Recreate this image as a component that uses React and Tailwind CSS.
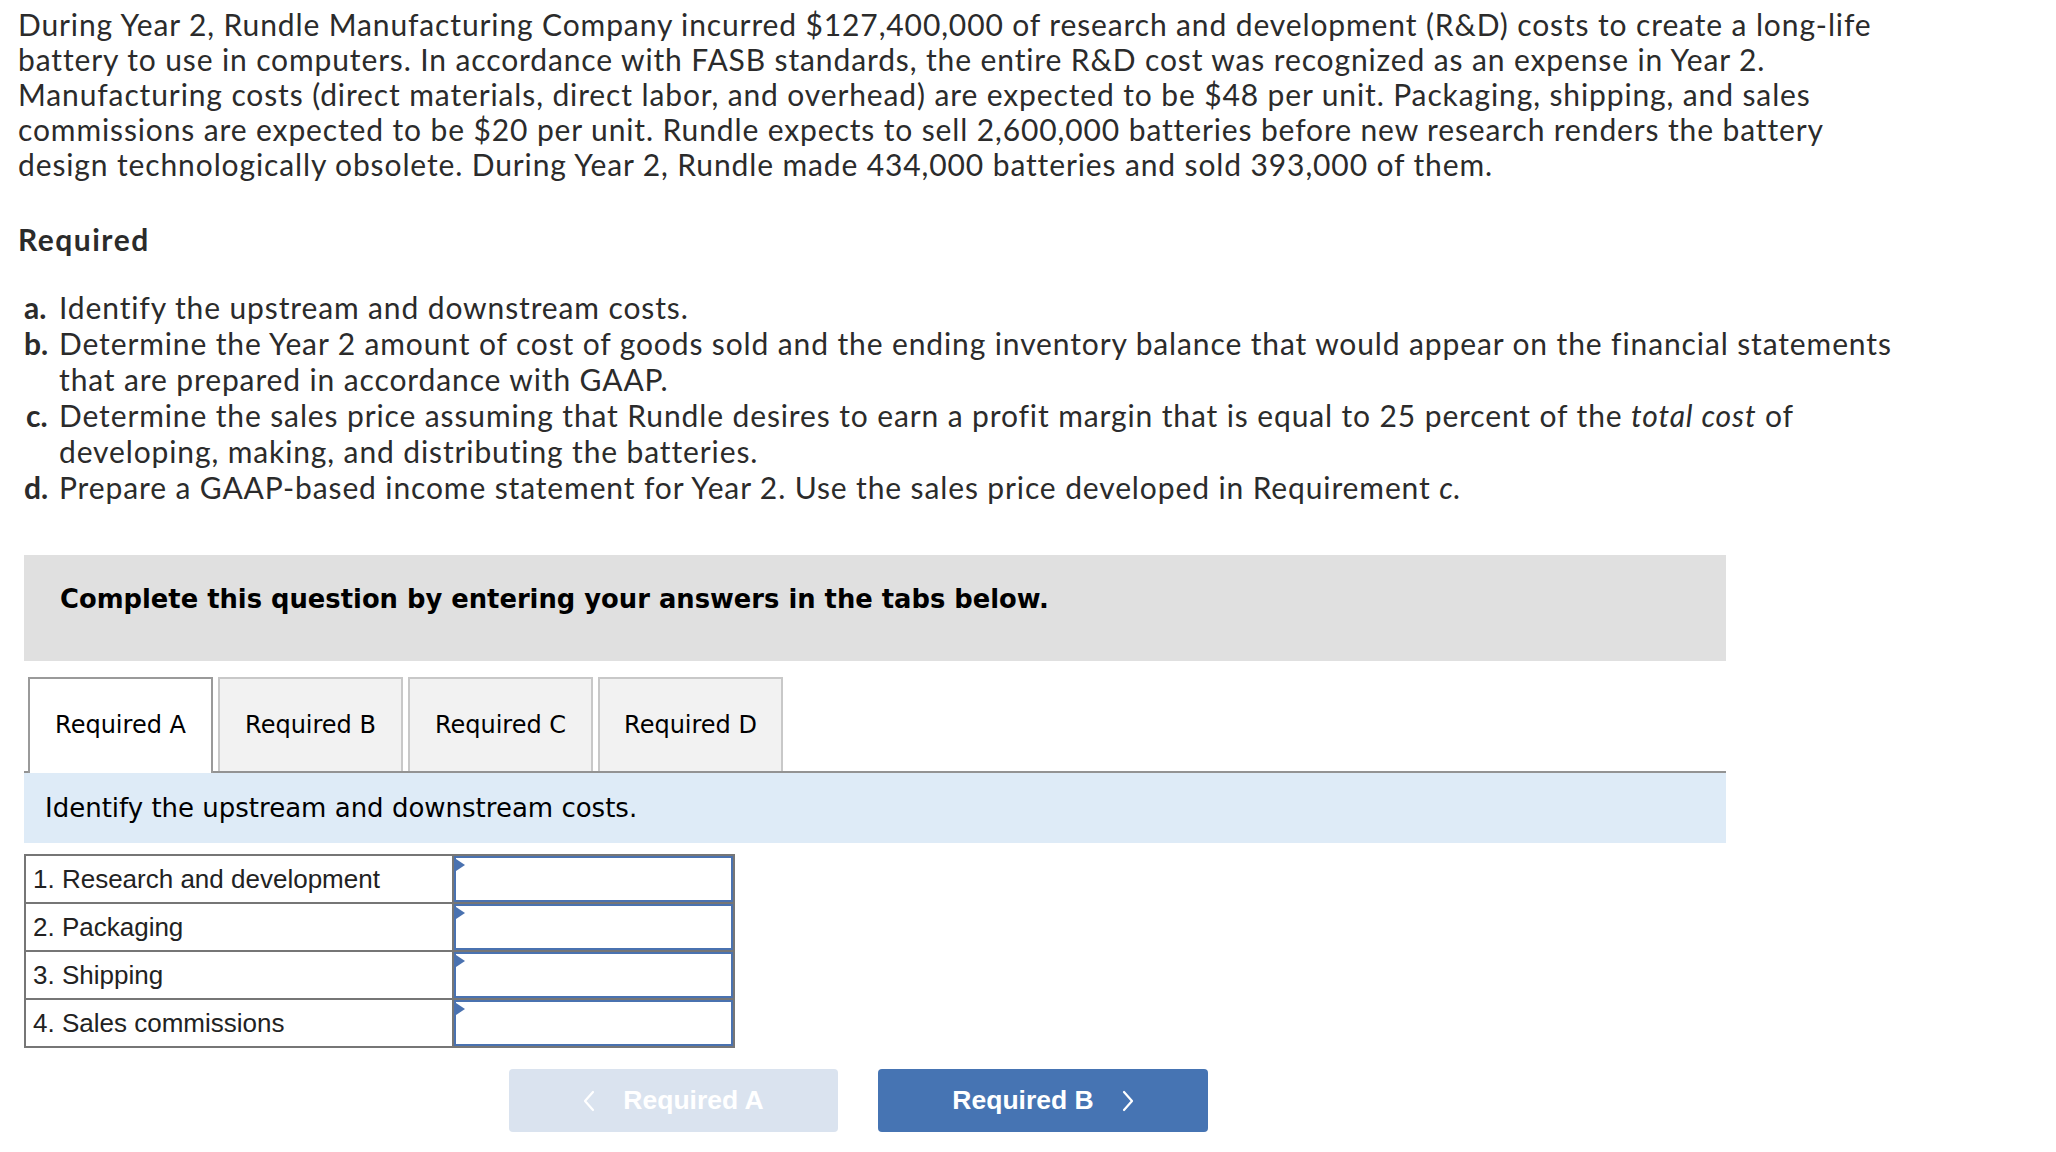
import React from "react";

const rows = [
    "1. Research and development",
    "2. Packaging",
    "3. Shipping",
    "4. Sales commissions",
];

const tabs = ["Required A", "Required B", "Required C", "Required D"];

function Chevron({ dir }) {
    return (
        <svg width="12" height="22" viewBox="0 0 12 22" fill="none">
            <polyline
                points={dir === "left" ? "10,2 2,11 10,20" : "2,2 10,11 2,20"}
                stroke="white"
                strokeWidth="2.2"
                strokeLinecap="round"
                strokeLinejoin="round"
            />
        </svg>
    );
}

export default function App() {
    return (
        <div className="min-h-screen bg-white pl-[18px] pt-[7px] text-[#2b2b2b]">
            {/* question text, line breaks as in the source */}
            <div className="font-['Lato',sans-serif] tracking-[0.055em]">
                <p className="whitespace-nowrap text-[30px] leading-[35px]">
                    During Year 2, Rundle Manufacturing Company incurred
                    $127,400,000 of research and development (R&amp;D) costs to
                    create a long-life
                    <br />
                    battery to use in computers. In accordance with FASB
                    standards, the entire R&amp;D cost was recognized as an
                    expense in Year 2.
                    <br />
                    Manufacturing costs (direct materials, direct labor, and
                    overhead) are expected to be $48 per unit. Packaging,
                    shipping, and sales
                    <br />
                    commissions are expected to be $20 per unit. Rundle expects
                    to sell 2,600,000 batteries before new research renders the
                    battery
                    <br />
                    design technologically obsolete. During Year 2, Rundle made
                    434,000 batteries and sold 393,000 of them.
                </p>
                <h3 className="mt-[40px] text-[30px] font-bold leading-[35px] tracking-[0.05em]">
                    Required
                </h3>
                <ul className="mt-[32px] whitespace-nowrap pl-[6px] text-[30px] leading-[36px]">
                    <li className="flex">
                        <span className="w-[35px] shrink-0 font-bold tracking-normal">a.</span>
                        <span>Identify the upstream and downstream costs.</span>
                    </li>
                    <li className="flex">
                        <span className="w-[35px] shrink-0 font-bold tracking-normal">b.</span>
                        <span>
                            Determine the Year 2 amount of cost of goods sold
                            and the ending inventory balance that would appear
                            on the financial statements
                            <br />
                            that are prepared in accordance with GAAP.
                        </span>
                    </li>
                    <li className="flex">
                        <span className="w-[35px] shrink-0 pl-[2px] font-bold tracking-normal">c.</span>
                        <span>
                            Determine the sales price assuming that Rundle
                            desires to earn a profit margin that is equal to 25
                            percent of the <i>total cost</i> of
                            <br />
                            developing, making, and distributing the batteries.
                        </span>
                    </li>
                    <li className="flex">
                        <span className="w-[35px] shrink-0 font-bold tracking-normal">d.</span>
                        <span>
                            Prepare a GAAP-based income statement for Year 2.
                            Use the sales price developed in Requirement{" "}
                            <i>c.</i>
                        </span>
                    </li>
                </ul>
            </div>

            {/* answer area */}
            <div className="ml-[6px] w-[1702px] font-['DejaVu_Sans',sans-serif] text-black">
                <div className="mt-[50px] h-[106px] bg-[#e0e0e0] pl-[36px] pt-[29px] text-[25.8px] font-bold leading-[30px]">
                    Complete this question by entering your answers in the
                    tabs below.
                </div>

                <div className="mt-[16px] flex items-end gap-[5px] border-b-2 border-[#939393] pl-[4px]">
                    {tabs.map((t, i) =>
                        i === 0 ? (
                            <div
                                key={t}
                                className="relative -mb-[2px] flex h-[96px] w-[185px] items-center justify-center border-2 border-b-0 border-[#9a9a9a] bg-white pb-[2px] text-[24px]"
                            >
                                {t}
                            </div>
                        ) : (
                            <div
                                key={t}
                                className="flex h-[94px] w-[185px] items-center justify-center border-2 border-b-0 border-[#c8c8c8] bg-[#f2f2f2] text-[24px]"
                            >
                                {t}
                            </div>
                        )
                    )}
                </div>

                <div className="flex h-[70px] items-center bg-[#deebf7] pl-[21px] text-[26px]">
                    Identify the upstream and downstream costs.
                </div>
            </div>

            <div className="ml-[6px] mt-[11px] w-[711px] border-2 border-[#767676] font-['Liberation_Sans',Arial,sans-serif] text-[26px] text-[#222]">
                {rows.map((r, i) => (
                    <div
                        key={r}
                        className={
                            i === 0
                                ? "flex h-[46px]"
                                : "flex h-[48px] border-t-2 border-[#767676]"
                        }
                    >
                        <div className="flex w-[428px] items-center border-r-2 border-[#767676] pl-[7px]">
                            {r}
                        </div>
                        <div className="relative flex-1 border-2 border-[#4a72b0] bg-white">
                            <span className="absolute left-0 top-[1px] h-0 w-0 border-y-[6px] border-l-[9px] border-y-transparent border-l-[#4a72b0]" />
                        </div>
                    </div>
                ))}
            </div>

            <div className="ml-[491px] mt-[21px] flex gap-[40px] font-['Liberation_Sans',Arial,sans-serif] text-[26.5px] font-bold text-white">
                <button className="flex h-[63px] w-[329px] items-center justify-center gap-[28px] rounded-[4px] bg-[#dae3ef]">
                    <Chevron dir="left" />
                    <span>Required A</span>
                </button>
                <button className="flex h-[63px] w-[330px] items-center justify-center gap-[28px] rounded-[4px] bg-[#4674b3]">
                    <span>Required B</span>
                    <Chevron dir="right" />
                </button>
            </div>
        </div>
    );
}
